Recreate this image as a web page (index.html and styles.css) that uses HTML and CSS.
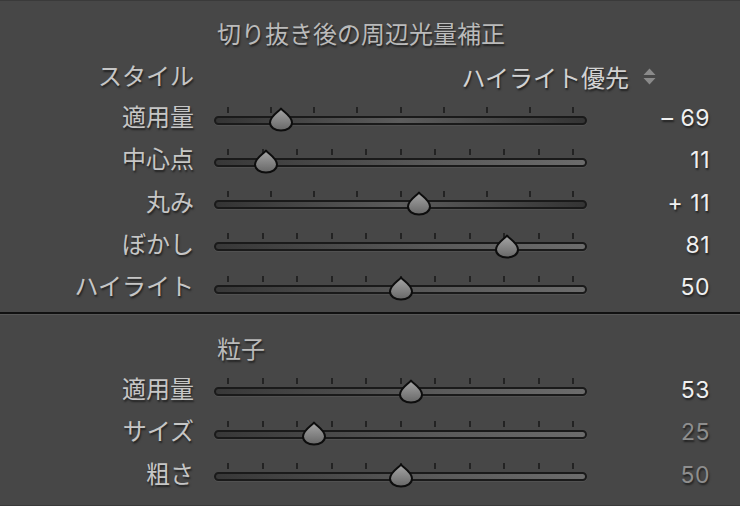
FILE: index.html
```html
<!DOCTYPE html>
<html lang="ja">
<head>
<meta charset="utf-8">
<title>切り抜き後の周辺光量補正</title>
<link rel="stylesheet" href="styles.css">
</head>
<body>
<div class="panel">
  <svg class="defs" width="0" height="0" aria-hidden="true">
    <defs>
      <linearGradient id="tg" x1="0" y1="0" x2="0" y2="1">
        <stop offset="0" stop-color="#a6a6a6"/>
        <stop offset="1" stop-color="#676767"/>
      </linearGradient>
    </defs>
  </svg>

  <section class="group first">
    <div class="title">切り抜き後の周辺光量補正</div>
    <div class="style-row">
      <span class="label">スタイル</span>
      <span class="select">
        <span class="select-text">ハイライト優先</span>
        <svg class="updown" width="13" height="18" viewBox="0 0 13 18"><path d="M6.5 0.5 L12.5 7 L0.5 7 Z M0.5 10 L12.5 10 L6.5 16.5 Z" fill="#8a8a8a"/></svg>
      </span>
    </div>
    <div class="rows">
      <div class="row">
        <span class="label">適用量</span>
        <div class="slider bipolar">
          <div class="ticks"><i></i><i></i><i></i><i></i><i></i><i></i><i></i><i></i><i></i></div>
          <div class="track"></div>
          <div class="range"><svg class="thumb" style="left:15.5%" width="26" height="26" viewBox="0 0 26 26"><path d="M13 1.5 C15 4.5 24 9 24 15.5 C24 20.5 19 23.5 13 23.5 C7 23.5 2 20.5 2 15.5 C2 9 11 4.5 13 1.5 Z"/></svg></div>
        </div>
        <span class="value">– 69</span>
      </div>
      <div class="row">
        <span class="label">中心点</span>
        <div class="slider">
          <div class="ticks"><i></i><i></i><i></i><i></i><i></i><i></i><i></i><i></i><i></i><i></i><i></i></div>
          <div class="track"></div>
          <div class="range"><svg class="thumb" style="left:11%" width="26" height="26" viewBox="0 0 26 26"><path d="M13 1.5 C15 4.5 24 9 24 15.5 C24 20.5 19 23.5 13 23.5 C7 23.5 2 20.5 2 15.5 C2 9 11 4.5 13 1.5 Z"/></svg></div>
        </div>
        <span class="value">11</span>
      </div>
      <div class="row">
        <span class="label">丸み</span>
        <div class="slider bipolar">
          <div class="ticks"><i></i><i></i><i></i><i></i><i></i><i></i><i></i><i></i><i></i></div>
          <div class="track"></div>
          <div class="range"><svg class="thumb" style="left:55.5%" width="26" height="26" viewBox="0 0 26 26"><path d="M13 1.5 C15 4.5 24 9 24 15.5 C24 20.5 19 23.5 13 23.5 C7 23.5 2 20.5 2 15.5 C2 9 11 4.5 13 1.5 Z"/></svg></div>
        </div>
        <span class="value">+ 11</span>
      </div>
      <div class="row">
        <span class="label">ぼかし</span>
        <div class="slider">
          <div class="ticks"><i></i><i></i><i></i><i></i><i></i><i></i><i></i><i></i><i></i><i></i><i></i></div>
          <div class="track"></div>
          <div class="range"><svg class="thumb" style="left:81%" width="26" height="26" viewBox="0 0 26 26"><path d="M13 1.5 C15 4.5 24 9 24 15.5 C24 20.5 19 23.5 13 23.5 C7 23.5 2 20.5 2 15.5 C2 9 11 4.5 13 1.5 Z"/></svg></div>
        </div>
        <span class="value">81</span>
      </div>
      <div class="row">
        <span class="label">ハイライト</span>
        <div class="slider">
          <div class="ticks"><i></i><i></i><i></i><i></i><i></i><i></i><i></i><i></i><i></i><i></i><i></i></div>
          <div class="track"></div>
          <div class="range"><svg class="thumb" style="left:50%" width="26" height="26" viewBox="0 0 26 26"><path d="M13 1.5 C15 4.5 24 9 24 15.5 C24 20.5 19 23.5 13 23.5 C7 23.5 2 20.5 2 15.5 C2 9 11 4.5 13 1.5 Z"/></svg></div>
        </div>
        <span class="value">50</span>
      </div>
    </div>
  </section>

  <div class="divider"></div>

  <section class="group second">
    <div class="title">粒子</div>
    <div class="rows">
      <div class="row">
        <span class="label">適用量</span>
        <div class="slider">
          <div class="ticks"><i></i><i></i><i></i><i></i><i></i><i></i><i></i><i></i><i></i><i></i><i></i></div>
          <div class="track"></div>
          <div class="range"><svg class="thumb" style="left:53%" width="26" height="26" viewBox="0 0 26 26"><path d="M13 1.5 C15 4.5 24 9 24 15.5 C24 20.5 19 23.5 13 23.5 C7 23.5 2 20.5 2 15.5 C2 9 11 4.5 13 1.5 Z"/></svg></div>
        </div>
        <span class="value">53</span>
      </div>
      <div class="row">
        <span class="label">サイズ</span>
        <div class="slider">
          <div class="ticks"><i></i><i></i><i></i><i></i><i></i><i></i><i></i><i></i><i></i><i></i><i></i></div>
          <div class="track"></div>
          <div class="range"><svg class="thumb" style="left:25%" width="26" height="26" viewBox="0 0 26 26"><path d="M13 1.5 C15 4.5 24 9 24 15.5 C24 20.5 19 23.5 13 23.5 C7 23.5 2 20.5 2 15.5 C2 9 11 4.5 13 1.5 Z"/></svg></div>
        </div>
        <span class="value dim">25</span>
      </div>
      <div class="row">
        <span class="label">粗さ</span>
        <div class="slider">
          <div class="ticks"><i></i><i></i><i></i><i></i><i></i><i></i><i></i><i></i><i></i><i></i><i></i></div>
          <div class="track"></div>
          <div class="range"><svg class="thumb" style="left:50%" width="26" height="26" viewBox="0 0 26 26"><path d="M13 1.5 C15 4.5 24 9 24 15.5 C24 20.5 19 23.5 13 23.5 C7 23.5 2 20.5 2 15.5 C2 9 11 4.5 13 1.5 Z"/></svg></div>
        </div>
        <span class="value dim">50</span>
      </div>
    </div>
  </section>
</div>
</body>
</html>
```

FILE: styles.css
```css
html, body {
  margin: 0;
  padding: 0;
  background: #474747;
}

.panel {
  width: 740px;
  height: 506px;
  box-sizing: border-box;
  background: #474747;
  border-top: 1px solid #3a3a3a;
  border-bottom: 1px solid #3a3a3a;
  font-family: "Noto Sans CJK JP", "Noto Sans", sans-serif;
  color: #c6c6c6;
  overflow: hidden;
}

.defs {
  display: block;
  width: 0;
  height: 0;
  overflow: hidden;
}

.group.first {
  padding-top: 14px;
}

.group.second {
  padding-top: 15px;
}

.title {
  padding-left: 217px;
  font-size: 24px;
  line-height: 36px;
  height: 36px;
  color: #bababa;
  text-shadow: 1px 2px 2px rgba(0, 0, 0, 0.55);
  white-space: nowrap;
}

.style-row {
  margin-top: 4px;
  display: grid;
  grid-template-columns: 194px 1fr;
  height: 36px;
  align-items: center;
}

.label {
  display: block;
  text-align: right;
  font-size: 24px;
  line-height: 34px;
  color: #c6c6c6;
  text-shadow: 1px 2px 2px rgba(0, 0, 0, 0.55);
  white-space: nowrap;
}

.style-row .label {
  line-height: 36px;
}

.select {
  display: flex;
  justify-content: flex-end;
  align-items: center;
  gap: 14px;
  padding-right: 84px;
  padding-top: 4px;
}

.select-text {
  font-size: 24px;
  line-height: 36px;
  color: #d2d2d2;
  text-shadow: 1px 2px 2px rgba(0, 0, 0, 0.55);
  white-space: nowrap;
}

.updown {
  display: block;
}

.group.first .rows {
  margin-top: 8px;
}

.group.second .rows {
  margin-top: 5px;
}

.row {
  display: grid;
  grid-template-columns: 194px 373px 103px;
  column-gap: 20px;
  height: 42.3px;
  align-items: start;
}

.slider {
  position: relative;
  height: 42.3px;
  padding-top: 7.5px;
  box-sizing: border-box;
}

.ticks {
  display: flex;
  justify-content: space-between;
  padding: 0 13px;
  height: 6px;
}

.ticks i {
  display: block;
  width: 2px;
  height: 6px;
  background: #232323;
}

.track {
  margin-top: 3px;
  height: 9px;
  box-sizing: border-box;
  border: 2px solid #1a1a1a;
  border-radius: 5px;
  background: linear-gradient(90deg, #383838 0%, #5a5a5a 60%, #6c6c6c 100%);
  box-shadow: 0 1px 0 rgba(255, 255, 255, 0.06);
}

.bipolar .track {
  background: linear-gradient(90deg, #343434 0%, #5c5c5c 50%, #343434 100%);
}

.range {
  position: absolute;
  left: 14px;
  right: 14px;
  top: 0;
  bottom: 0;
}

.thumb {
  position: absolute;
  top: 7.8px;
  transform: translateX(-50%);
  overflow: visible;
}

.thumb path {
  fill: url(#tg);
  stroke: #0d0d0d;
  stroke-width: 2;
  stroke-linejoin: round;
}

.value {
  display: block;
  text-align: right;
  font-family: "Inter", "Noto Sans", sans-serif;
  font-size: 23px;
  line-height: 38px;
  letter-spacing: 0.5px;
  color: #f0f0f0;
  text-shadow: 1px 2px 2px rgba(0, 0, 0, 0.55);
  white-space: pre;
}

.value.dim {
  color: #8e8e8e;
}

.divider {
  margin-top: 1.5px;
  height: 2px;
  background: #111111;
  border-bottom: 1px solid #575757;
}
```
